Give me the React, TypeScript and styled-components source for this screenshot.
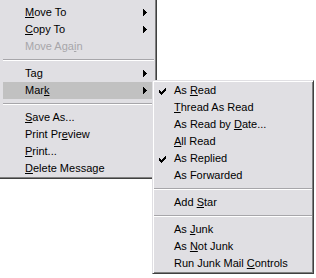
import React from "react";
import styled, { createGlobalStyle } from "styled-components";

type Entry =
  | { sep: true }
  | {
      sep?: false;
      label: string;
      key?: number;
      sub?: boolean;
      checked?: boolean;
      disabled?: boolean;
      active?: boolean;
    };

const mainItems: Entry[] = [
  { label: "Move To", key: 0, sub: true },
  { label: "Copy To", key: 0, sub: true },
  { label: "Move Again", key: 8, disabled: true },
  { sep: true },
  { label: "Tag", key: 2, sub: true },
  { label: "Mark", key: 3, sub: true, active: true },
  { sep: true },
  { label: "Save As...", key: 0 },
  { label: "Print Preview", key: 8 },
  { label: "Print...", key: 0 },
  { label: "Delete Message", key: 0 },
];

const markItems: Entry[] = [
  { label: "As Read", key: 3, checked: true },
  { label: "Thread As Read", key: 0 },
  { label: "As Read by Date...", key: 11 },
  { label: "All Read", key: 0 },
  { label: "As Replied", checked: true },
  { label: "As Forwarded" },
  { sep: true },
  { label: "Add Star", key: 4 },
  { sep: true },
  { label: "As Junk", key: 3 },
  { label: "As Not Junk", key: 3 },
  { label: "Run Junk Mail Controls", key: 14 },
];

export default function App() {
  return (
    <>
      <GlobalStyle />
      <Screen>
        <MainMenu>
          {mainItems.map((item, i) =>
            item.sep ? <Separator key={i} /> : <MenuRow key={i} item={item} gutter={22} />
          )}
        </MainMenu>
        <SubMenu>
          {markItems.map((item, i) =>
            item.sep ? <Separator key={i} /> : <MenuRow key={i} item={item} gutter={20} />
          )}
        </SubMenu>
      </Screen>
    </>
  );
}

function MenuRow({ item, gutter }: { item: Exclude<Entry, { sep: true }>; gutter: number }) {
  const { label, key } = item;
  const text =
    key === undefined ? (
      label
    ) : (
      <>
        {label.slice(0, key)}
        <Key>{label[key]}</Key>
        {label.slice(key + 1)}
      </>
    );

  return (
    <Row $active={item.active} $disabled={item.disabled} $gutter={gutter}>
      {item.checked && (
        <Check width="7" height="7" viewBox="0 0 7 7">
          <path
            d="M6 0h1v1h-1z M5 1h2v1h-2z M0 2h1v1h-1z M4 2h3v1h-3z M0 3h2v1h-2z M3 3h3v1h-3z M0 4h5v1h-5z M1 5h3v1h-3z M2 6h1v1h-1z"
            fill="#000"
            shapeRendering="crispEdges"
          />
        </Check>
      )}
      <Label>{text}</Label>
      {item.sub && (
        <Arrow width="4" height="7" viewBox="0 0 4 7">
          <path
            d="M0 0h1v7h-1z M1 1h1v5h-1z M2 2h1v3h-1z M3 3h1v1h-1z"
            fill="#000"
            shapeRendering="crispEdges"
          />
        </Arrow>
      )}
    </Row>
  );
}

const GlobalStyle = createGlobalStyle`
  body {
    margin: 0;
    background: #ffffff;
    font-family: "Liberation Sans", Arial, sans-serif;
  }
`;

const Screen = styled.div`
  position: relative;
  width: 316px;
  height: 278px;
  overflow: hidden;
`;

const MainMenu = styled.div`
  width: 157px;
  box-sizing: border-box;
  padding: 4px 2px 0 3px;
  background: #e0dfe3;
  border-right: 1px solid #404040;
  border-bottom: 1px solid #404040;
  box-shadow: inset -1px -1px 0 #808080;
  padding-bottom: 1px;
`;

const SubMenu = styled.div`
  position: absolute;
  left: 152px;
  top: 80px;
  width: 162px;
  box-sizing: border-box;
  padding: 0 1px 1px 1px;
  background: #e0dfe3;
  border-top: 1px solid #e0dfe3;
  border-left: 1px solid #e0dfe3;
  border-right: 1px solid #404040;
  border-bottom: 1px solid #404040;
  box-shadow: inset 1px 1px 0 #ffffff, inset -1px -1px 0 #808080;
  padding-top: 1px;
`;

const Row = styled.div<{ $active?: boolean; $disabled?: boolean; $gutter: number }>`
  position: relative;
  display: flex;
  align-items: center;
  height: 17px;
  padding: 0 7px 0 ${(p) => p.$gutter}px;
  background: ${(p) => (p.$active ? "#c1c1c1" : "transparent")};
  color: ${(p) => (p.$disabled ? "#a7a6aa" : "#000000")};
  font-size: 11px;
  line-height: 17px;
  white-space: nowrap;
`;

const Label = styled.span`
  flex: 1;
`;

const Key = styled.span`
  text-decoration: underline;
  text-underline-offset: 1px;
`;

const Check = styled.svg`
  position: absolute;
  left: 5px;
  top: 6px;
`;

const Arrow = styled.svg`
  display: block;
`;

const Separator = styled.div`
  height: 10px;
  box-sizing: border-box;
  padding-top: 4px;
  &::before {
    content: "";
    display: block;
    height: 1px;
    background: #a7a6aa;
    border-bottom: 1px solid #ffffff;
  }
`;
